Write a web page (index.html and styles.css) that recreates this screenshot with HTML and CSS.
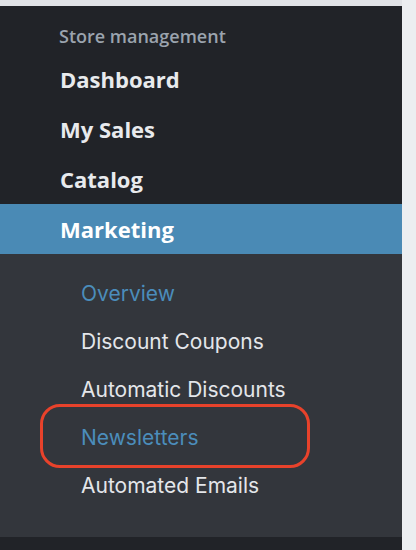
FILE: index.html
```html
<!DOCTYPE html>
<html lang="en">
<head>
    <meta charset="UTF-8">
    <meta name="viewport" content="width=device-width, initial-scale=1.0">
    <title>Store management</title>
    <link rel="stylesheet" href="styles.css">
</head>
<body>

    <div class="sidebar">
        <div class="top-strip"></div>

        <nav class="menu">
            <div class="menu-label">Store management</div>
            <a class="menu-item" href="#">Dashboard</a>
            <a class="menu-item" href="#">My Sales</a>
            <a class="menu-item" href="#">Catalog</a>
            <a class="menu-item active" href="#">Marketing</a>

            <!-- Подменю раздела Marketing -->
            <ul class="submenu">
                <li><a class="sub-item current" href="#">Overview</a></li>
                <li><a class="sub-item" href="#">Discount Coupons</a></li>
                <li><a class="sub-item" href="#">Automatic Discounts</a></li>
                <li class="marked"><a class="sub-item current" href="#">Newsletters</a></li>
                <li><a class="sub-item" href="#">Automated Emails</a></li>
            </ul>
        </nav>
    </div>

</body>
</html>
```

FILE: styles.css
```css
body {
    margin: 0;
    background-color: #eceef1;
    height: 550px;
    overflow: hidden;
}
.sidebar {
    width: 402px;
    height: 100%;
    background-color: #212328;
    display: flex;
    flex-direction: column;
}
.top-strip {
    height: 6px;
    background-color: #e1e3e7;
}
.menu {
    display: flex;
    flex-direction: column;
    font-family: "Open Sans", Lato, sans-serif;
}
.menu-label {
    margin: 20px 0 8px 59px;
    line-height: 20px;
    font-size: 18px;
    font-weight: 600;
    color: #9ba3ae;
}
.menu-item {
    display: block;
    height: 50px;
    line-height: 50px;
    padding-left: 60px;
    font-size: 22px;
    font-weight: 700;
    color: #e8eaed;
    text-decoration: none;
}
.menu-item.active {
    background-color: #4a8ab5;
    color: #ffffff;
}
.submenu {
    list-style: none;
    margin: 0;
    padding: 16px 0 27px 0;
    background-color: #33363c;
    font-family: Inter, Roboto, sans-serif;
}
.submenu li {
    position: relative;
}
.sub-item {
    display: block;
    height: 48px;
    line-height: 48px;
    padding-left: 81px;
    font-size: 21px;
    color: #e4e6ea;
    text-decoration: none;
}
.sub-item.current {
    color: #4b8dbb;
}
.marked::after {
    content: "";
    position: absolute;
    left: 40px;
    top: -10px;
    width: 264px;
    height: 58px;
    border: 3px solid #e8422b;
    border-radius: 20px;
}
```
